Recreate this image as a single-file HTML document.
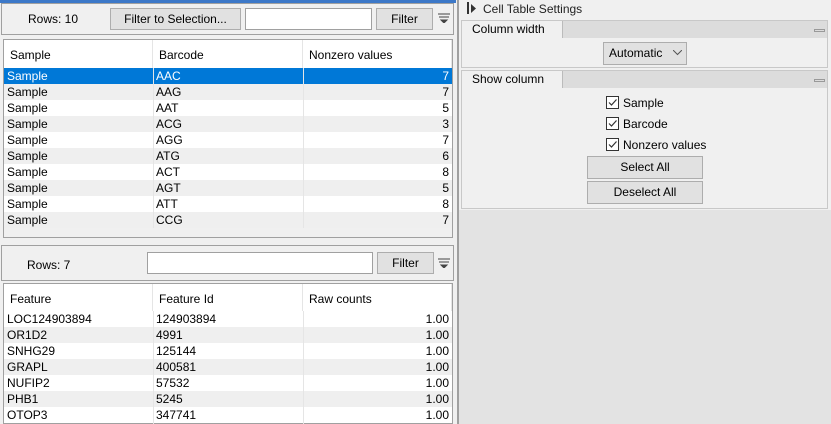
<!DOCTYPE html><html><head><style>
*{box-sizing:border-box;margin:0;padding:0}
body{width:831px;height:424px;overflow:hidden;background:#e3e3e3;font-family:"Liberation Sans",sans-serif;font-size:12px;color:#000;position:relative}
.a{position:absolute}
.btn{position:absolute;background:#e1e1e1;border:1px solid #adadad;text-align:center;line-height:20px}
.inp{position:absolute;background:#fff;border:1px solid #a0a0a0}
.row{position:absolute;left:4px;width:448px;height:16px;line-height:16px}
.row span{position:absolute}
.hd{position:absolute;top:0;height:28px;line-height:30px;border-right:1px solid #e5e5e5;padding-left:6px}
.chk{position:absolute;width:13px;height:13px;border:1px solid #333;background:#fff}
.sec{position:absolute;left:461px;width:367px;background:#f0f0f0;border:1px solid #c8c8c8}
</style></head><body>
<div class="a" style="left:0;top:0;width:457px;height:424px;background:#f0f0f0"></div>
<div class="a" style="left:0;top:0;width:456px;height:3px;background:#3c78c8"></div>
<div class="a" style="left:1px;top:3px;width:453px;height:32px;border:1px solid #a0a0a0;background:#f0f0f0"></div>
<div class="a" style="left:28px;top:12px">Rows: 10</div>
<div class="btn" style="left:110px;top:8px;width:131px;height:22px">Filter to Selection...</div>
<div class="inp" style="left:245px;top:8px;width:127px;height:22px"></div>
<div class="btn" style="left:376px;top:8px;width:57px;height:22px">Filter</div>
<svg class="a" style="left:438px;top:13px" width="12" height="10"><path d="M0 1h12M1 4h10M3 7l3 3 3-3z" stroke="#444" fill="#444"/></svg>
<div class="a" style="left:3px;top:39px;width:450px;height:199px;border:1px solid #a0a0a0;background:#f0f0f0"></div>
<div class="a" style="left:4px;top:40px;width:448px;height:28px;background:#fff">
<div class="hd" style="left:0;width:149px">Sample</div><div class="hd" style="left:149px;width:150px">Barcode</div><div class="hd" style="left:299px;width:149px">Nonzero values</div></div>
<div class="row" style="top:68px;background:#0078d7;color:#fff"><span style="left:3px">Sample</span><span style="left:152px">AAC</span><span style="right:3px">7</span></div>
<div class="row" style="top:84px;background:#efefef"><span style="left:3px">Sample</span><span style="left:152px">AAG</span><span style="right:3px">7</span></div>
<div class="row" style="top:100px;background:#fff"><span style="left:3px">Sample</span><span style="left:152px">AAT</span><span style="right:3px">5</span></div>
<div class="row" style="top:116px;background:#efefef"><span style="left:3px">Sample</span><span style="left:152px">ACG</span><span style="right:3px">3</span></div>
<div class="row" style="top:132px;background:#fff"><span style="left:3px">Sample</span><span style="left:152px">AGG</span><span style="right:3px">7</span></div>
<div class="row" style="top:148px;background:#efefef"><span style="left:3px">Sample</span><span style="left:152px">ATG</span><span style="right:3px">6</span></div>
<div class="row" style="top:164px;background:#fff"><span style="left:3px">Sample</span><span style="left:152px">ACT</span><span style="right:3px">8</span></div>
<div class="row" style="top:180px;background:#efefef"><span style="left:3px">Sample</span><span style="left:152px">AGT</span><span style="right:3px">5</span></div>
<div class="row" style="top:196px;background:#fff"><span style="left:3px">Sample</span><span style="left:152px">ATT</span><span style="right:3px">8</span></div>
<div class="row" style="top:212px;background:#efefef"><span style="left:3px">Sample</span><span style="left:152px">CCG</span><span style="right:3px">7</span></div>
<div class="a" style="left:153px;top:68px;width:1px;height:160px;background:#e5e5e5"></div>
<div class="a" style="left:303px;top:68px;width:1px;height:160px;background:#e5e5e5"></div>
<div class="a" style="left:1px;top:245px;width:453px;height:36px;border:1px solid #a0a0a0;background:#f0f0f0"></div>
<div class="a" style="left:27px;top:258px">Rows: 7</div>
<div class="inp" style="left:147px;top:252px;width:226px;height:22px"></div>
<div class="btn" style="left:377px;top:252px;width:57px;height:22px">Filter</div>
<svg class="a" style="left:438px;top:258px" width="12" height="10"><path d="M0 1h12M1 4h10M3 7l3 3 3-3z" stroke="#444" fill="#444"/></svg>
<div class="a" style="left:3px;top:283px;width:450px;height:141px;border:1px solid #a0a0a0;background:#fff"></div>
<div class="a" style="left:4px;top:284px;width:448px;height:27px;background:#fff">
<div class="hd" style="left:0;width:149px">Feature</div><div class="hd" style="left:149px;width:150px">Feature Id</div><div class="hd" style="left:299px;width:149px">Raw counts</div></div>
<div class="row" style="top:311px;background:#fff"><span style="left:3px">LOC124903894</span><span style="left:152px">124903894</span><span style="right:3px">1.00</span></div>
<div class="row" style="top:327px;background:#efefef"><span style="left:3px">OR1D2</span><span style="left:152px">4991</span><span style="right:3px">1.00</span></div>
<div class="row" style="top:343px;background:#fff"><span style="left:3px">SNHG29</span><span style="left:152px">125144</span><span style="right:3px">1.00</span></div>
<div class="row" style="top:359px;background:#efefef"><span style="left:3px">GRAPL</span><span style="left:152px">400581</span><span style="right:3px">1.00</span></div>
<div class="row" style="top:375px;background:#fff"><span style="left:3px">NUFIP2</span><span style="left:152px">57532</span><span style="right:3px">1.00</span></div>
<div class="row" style="top:391px;background:#efefef"><span style="left:3px">PHB1</span><span style="left:152px">5245</span><span style="right:3px">1.00</span></div>
<div class="row" style="top:407px;background:#fff"><span style="left:3px">OTOP3</span><span style="left:152px">347741</span><span style="right:3px">1.00</span></div>
<div class="a" style="left:153px;top:311px;width:1px;height:113px;background:#e5e5e5"></div>
<div class="a" style="left:303px;top:311px;width:1px;height:113px;background:#e5e5e5"></div>
<div class="a" style="left:457px;top:0;width:2px;height:424px;background:#a0a0a0"></div>
<div class="a" style="left:459px;top:0;width:372px;height:210px;background:#f0f0f0"></div>
<div class="a" style="left:467px;top:2px;width:2px;height:12px;background:#333"></div>
<svg class="a" style="left:471px;top:4px" width="6" height="9"><path d="M0 0l5 4.5L0 9z" fill="#333"/></svg>
<div class="a" style="left:483px;top:2px;color:#222">Cell Table Settings</div>
<div class="sec" style="top:20px;height:48px"></div>
<div class="a" style="left:462px;top:21px;width:365px;height:17px;background:#dcdcdc"></div>
<div class="a" style="left:462px;top:21px;width:101px;height:17px;background:#f0f0f0;border-right:1px solid #bbb;padding-left:10px;line-height:17px">Column width</div>
<div class="a" style="left:814px;top:29px;width:11px;height:3px;border:1px solid #999"></div>
<div class="a" style="left:603px;top:42px;width:84px;height:23px;background:#e1e1e1;border:1px solid #adadad;line-height:21px;padding-left:5px">Automatic</div>
<svg class="a" style="left:673px;top:50px" width="9" height="6"><path d="M0 0l4.5 4.5L9 0" stroke="#555" fill="none"/></svg>
<div class="sec" style="top:70px;height:139px"></div>
<div class="a" style="left:462px;top:71px;width:365px;height:17px;background:#dcdcdc"></div>
<div class="a" style="left:462px;top:71px;width:101px;height:17px;background:#f0f0f0;border-right:1px solid #bbb;padding-left:10px;line-height:17px">Show column</div>
<div class="a" style="left:814px;top:79px;width:11px;height:3px;border:1px solid #999"></div>
<div class="chk" style="left:606px;top:96px"></div><div class="chk" style="left:606px;top:117px"></div><div class="chk" style="left:606px;top:138px"></div>
<svg class="a" style="left:606px;top:96px" width="13" height="60"><g stroke="#333" fill="none" stroke-width="1.2"><path d="M3 6.5l2.5 2.5 5-5.5"/><path d="M3 27.5l2.5 2.5 5-5.5"/><path d="M3 48.5l2.5 2.5 5-5.5"/></g></svg>
<div class="a" style="left:623px;top:96px">Sample</div>
<div class="a" style="left:623px;top:117px">Barcode</div>
<div class="a" style="left:623px;top:138px">Nonzero values</div>
<div class="btn" style="left:587px;top:156px;width:116px;height:23px">Select All</div>
<div class="btn" style="left:587px;top:181px;width:116px;height:23px">Deselect All</div>
</body></html>
